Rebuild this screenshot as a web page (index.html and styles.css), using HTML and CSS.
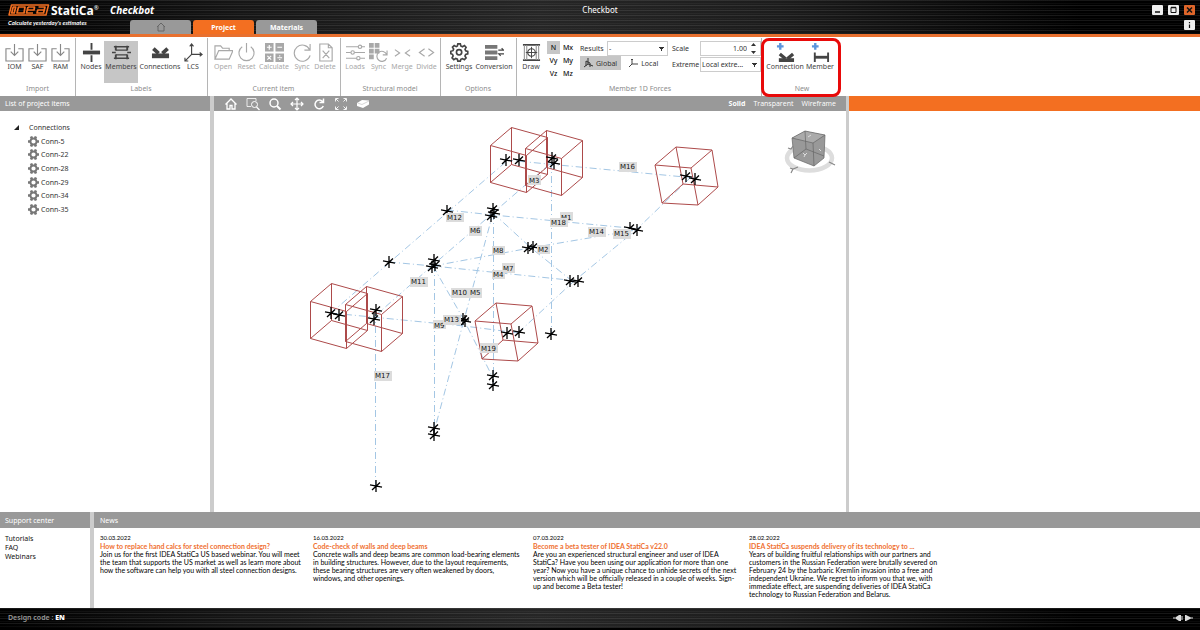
FILE: index.html
```html
<!DOCTYPE html>
<html lang="en">
<head>
<meta charset="utf-8">
<title>Checkbot</title>
<link rel="stylesheet" href="styles.css">
</head>
<body>
<svg class="defs" aria-hidden="true">
  <defs>
    <g id="i-import"><path d="M6 6H1v13h18V6h-5M10 1v12M6 9l4 4 4-4" /></g>
    <g id="i-plus"><path d="M4.500 0v7M1 3.500h7" stroke="#5b94dc" stroke-width="2.500"/></g>
    <g id="i-conn"><path d="M3 16h16v4H3z" fill="currentColor" stroke="none"/><path d="M4 11.500l6 5M18 11.500l-6 5" stroke-width="3.500"/></g>
    <g id="i-sync"><path d="M17.500 7A8.500 8.500 0 1 0 18 13M18 1v6.500h-6" /></g>
    <g id="i-gear"><path d="M8.500 1h3l.6 2.600 2 .9 2.400-1.400 2 2.100-1.300 2.300.8 2 2.500.6v3l-2.500.7-.9 2 1.400 2.300-2.100 2.100-2.300-1.300-2 .8-.6 2.300h-3l-.6-2.400-2-.8-2.300 1.300-2.100-2.100 1.300-2.300-.8-2L.0 13v-3l2.600-.7.8-2L2 5.100l2.100-2.100 2.400 1.400 1.400-.8z"/><circle cx="10" cy="11.300" r="3.200"/></g>
    <g id="i-item"><circle cx="6" cy="6" r="3.300" stroke-width="2"/><path d="M3.300.5l1 2.200M8.700.5l-1 2.200M0 6h2.500M12 6H9.500M3.300 11.500l1-2.200M8.700 11.500l-1-2.200" stroke-width="2.800"/></g>
    <g id="star"><path d="M-6-1.200L6 1.200M0-6V6M-4 4L4-3.500"/></g>
    <path id="boxa" d="M0 0L36 10V47L0 37zM21-18L57-8V29L21 19zM0 0L21-18M36 10L57-8M36 47L57 29M0 37L21 19"/>
    <path id="boxb" d="M0 0L21-18 57-15 36 3zM7 38L28 19 63 22 43 40zM0 0L7 38M21-18L28 19M57-15L63 22M36 3L43 40"/>
  </defs>
</svg>

<div class="app">
  <header class="titlebar">
    <div class="title-left">
      <div class="brand">
        <div class="brand-row">
          <svg class="logo" width="42" height="12" viewBox="0 0 42 12" role="img" aria-label="IDEA">
            <path d="M3.500 1h37L38 11H1z" fill="none" stroke="#f36f21" stroke-width="1.500" stroke-linejoin="round"/>
            <path d="M5.200 3L3.700 9h2.500l1.500-6zM10.500 3h6.500l-1 6H9zM20 3h6.500l-.5 3h-6.500M20 3l-1.500 6h6.500M30.500 3h6.500l-1.500 6h-6.500l.8-3h6.500" fill="none" stroke="#f36f21" stroke-width="1.700" stroke-linejoin="round"/>
          </svg>
          <span class="static">StatiCa<sup>®</sup></span>
          <span class="product">Checkbot</span>
        </div>
        <div class="tagline">Calculate yesterday's estimates</div>
      </div>
      <nav class="tabs">
        <button class="tab" aria-label="Home"><svg width="10" height="10" viewBox="0 0 10 10" fill="none" stroke="#666"><path d="M1 5l4-4 4 4M2 4v5h6V4"/></svg></button>
        <button class="tab active">Project</button>
        <button class="tab">Materials</button>
      </nav>
    </div>
    <h1 class="window-title">Checkbot</h1>
    <div class="window-buttons">
      <button aria-label="Minimize"><svg width="11" height="10" viewBox="0 0 11 10"><path d="M3 7h5" stroke="#111" stroke-width="1.500"/></svg></button>
      <button aria-label="Maximize"><svg width="11" height="10" viewBox="0 0 11 10"><path d="M3 2.500h5v5H3z" fill="none" stroke="#111"/><path d="M3 2.500h5" stroke="#111" stroke-width="1.500"/></svg></button>
      <button class="close" aria-label="Close"><svg width="11" height="10" viewBox="0 0 11 10"><path d="M3 2.500l5 5M8 2.500l-5 5" stroke="#111" stroke-width="1.500"/></svg></button>
      <button class="info" aria-label="Info"><svg width="11" height="10" viewBox="0 0 11 10"><path d="M5.500 2v1.300M5.500 4.500V8" stroke="#111" stroke-width="1.200"/></svg></button>
    </div>
  </header>

  <section class="ribbon">
    <div class="group import">
      <div class="tools">
        <button class="tool soft"><svg viewBox="0 0 20 20"><use href="#i-import"/></svg>IOM</button>
        <button class="tool soft"><svg viewBox="0 0 20 20"><use href="#i-import"/></svg>SAF</button>
        <button class="tool soft"><svg viewBox="0 0 20 20"><use href="#i-import"/></svg>RAM</button>
      </div>
      <h2>Import</h2>
    </div>
    <div class="group labels">
      <div class="tools">
        <button class="tool"><svg viewBox="0 0 20 20"><path d="M1 10h18" stroke-width="4"/><path d="M10 0v7M10 13v7" stroke-width="2"/></svg>Nodes</button>
        <button class="tool pressed"><svg viewBox="0 0 20 20"><path d="M2 4h16M2 16h16M4 7.500h12M4 12.500h12" stroke-width="1.500"/><path d="M4 3v5M16 3v5M4 12v5M16 12v5" stroke-width="2"/><path d="M0 10h4M16 10h4" stroke-width="1.500"/></svg>Members</button>
        <button class="tool"><svg viewBox="0 0 20 20"><path d="M1 11h18v5H1z" fill="currentColor" stroke="none"/><path d="M2.500 6l5.500 5M17.500 6l-5.500 5" stroke-width="4"/></svg>Connections</button>
        <button class="tool"><svg viewBox="0 0 20 20"><path d="M8 1v11h11M8 12L1 19M6 3.500L8 1l2 2.500M16.500 10l2.500 2-2.500 2M1 15.500V19h3.500"/></svg>LCS</button>
      </div>
      <h2>Labels</h2>
    </div>
    <div class="group current">
      <div class="tools">
        <button class="tool off" disabled><svg viewBox="0 0 20 20"><path d="M1 17V3h6l2 2.500h7V8M1 17L5 8h15l-4 9z"/></svg>Open</button>
        <button class="tool off" disabled><svg viewBox="0 0 20 20"><path d="M5.500 4a8 8 0 1 0 9 0M10 0v10"/></svg>Reset</button>
        <button class="tool off" disabled><svg viewBox="0 0 20 20"><path d="M0 0h9v9H0zM11 0h9v9h-9zM0 11h9v9H0zM11 11h9v9h-9z" fill="currentColor" stroke="none"/><path d="M4.500 2v5M2 4.500h5M13 4.500h5M2.500 13.500l4 4M6.500 13.500l-4 4M13 15.500h5M15.500 13v1.200M15.500 16.800V18" stroke="#fff"/></svg>Calculate</button>
        <button class="tool off" disabled><svg viewBox="0 0 20 20"><use href="#i-sync"/></svg>Sync</button>
        <button class="tool off" disabled><svg viewBox="0 0 20 20"><path d="M4 1h9l4 4v14H4zM13 1v4h4M7 8l7 8M14 8l-7 8"/></svg>Delete</button>
      </div>
      <h2>Current item</h2>
    </div>
    <div class="group structural">
      <div class="tools">
        <button class="tool off" disabled><svg viewBox="0 0 20 20"><path d="M0 4h13M16.500 4H20M0 10h5M9 10h11M0 16h11M15 16h5"/><circle cx="14.700" cy="4" r="1.800"/><circle cx="7" cy="10" r="1.800"/><circle cx="13" cy="16" r="1.800"/></svg>Loads</button>
        <button class="tool off" disabled><svg viewBox="0 0 20 20"><path d="M0 0h5v5H0zM6 0h5v5H6zM0 6h5v5H0zM6 6h5v5H6zM0 12h5v5H0z" fill="currentColor" stroke="none"/><path d="M18.500 12a5.300 5.300 0 1 0 0 4M19 8v4.500h-4.500"/></svg>Sync</button>
        <button class="tool off" disabled><svg viewBox="0 0 20 20"><path d="M2 7l5 3.500L2 14M18 7l-5 3.500 5 3.500"/></svg>Merge</button>
        <button class="tool off" disabled><svg viewBox="0 0 20 20"><path d="M8 6l-5.500 4L8 14M12 6l5.500 4L12 14"/></svg>Divide</button>
      </div>
      <h2>Structural model</h2>
    </div>
    <div class="group options">
      <div class="tools">
        <button class="tool"><svg viewBox="-1 0 23 23" class="bold"><use href="#i-gear"/></svg>Settings</button>
        <button class="tool"><svg viewBox="0 0 20 20"><path d="M0 2h13v4H0zM0 8h13v4H0zM0 14h13v4H0z" fill="#777" stroke="none"/><path d="M14 7.500h5.500l-2-2M20 11.500h-5.500l2 2"/></svg>Conversion</button>
      </div>
      <h2>Options</h2>
    </div>
    <div class="group forces">
      <div class="forces-row">
        <button class="tool"><svg viewBox="0 0 20 20"><path d="M1 2h18M1 18h18" stroke-width="2"/><path d="M2.500 2v16M5 2v16M15 2v16M17.500 2v16" stroke="#999"/><circle cx="10" cy="10" r="4"/><path d="M10 4v12M4 10h12" stroke-width="1"/></svg>Draw</button>
        <div class="components">
          <button class="pressed">N</button><button>Mx</button>
          <button>Vy</button><button>My</button>
          <button>Vz</button><button>Mz</button>
        </div>
        <div class="result-fields">
          <div class="field">
            <label for="results">Results</label>
            <select id="results"><option>-</option></select>
          </div>
          <div class="axes">
            <button class="pressed"><svg width="9" height="10" viewBox="0 0 9 10" fill="none" stroke="#333"><path d="M4 0v6l5 2M4 6L0 9M2 3l4 2v4M2 3v5"/></svg>Global</button>
            <button><svg width="9" height="10" viewBox="0 0 9 10" fill="none" stroke="#444"><path d="M3 1v5l-3 3M3 6h6M2 2l1-1 1 1"/></svg>Local</button>
          </div>
        </div>
        <div class="scale-fields">
          <div class="field">
            <label for="scale">Scale</label>
            <div class="spinner"><input id="scale" type="text" value="1.00"><svg width="5" height="11" viewBox="0 0 5 11" fill="#333"><path d="M0 3l2.500-3L5 3zM0 8h5l-2.500 3z"/></svg></div>
          </div>
          <div class="field">
            <label for="extreme">Extreme</label>
            <select id="extreme"><option>Local extre...</option></select>
          </div>
        </div>
      </div>
      <h2>Member 1D Forces</h2>
    </div>
    <div class="group new">
      <div class="tools">
        <button class="tool"><svg viewBox="0 0 20 20"><use href="#i-plus"/><use href="#i-conn"/></svg>Connection</button>
        <button class="tool"><svg viewBox="0 0 20 20"><use href="#i-plus"/><path d="M4 10v10M18 10v10" stroke-width="2"/><path d="M4 15h14" stroke-width="3"/></svg>Member</button>
      </div>
      <h2>New</h2>
    </div>
  </section>

  <main class="workspace">
    <aside class="project">
      <h2 class="bar">List of project items</h2>
      <ul class="tree">
        <li class="root"><svg width="5" height="5" viewBox="0 0 5 5"><path d="M5 0v5H0z" fill="#222"/></svg>Connections</li>
        <li><svg width="11" height="11" viewBox="0 0 12 12"><use href="#i-item"/></svg>Conn-5</li>
        <li><svg width="11" height="11" viewBox="0 0 12 12"><use href="#i-item"/></svg>Conn-22</li>
        <li><svg width="11" height="11" viewBox="0 0 12 12"><use href="#i-item"/></svg>Conn-28</li>
        <li><svg width="11" height="11" viewBox="0 0 12 12"><use href="#i-item"/></svg>Conn-29</li>
        <li><svg width="11" height="11" viewBox="0 0 12 12"><use href="#i-item"/></svg>Conn-34</li>
        <li><svg width="11" height="11" viewBox="0 0 12 12"><use href="#i-item"/></svg>Conn-35</li>
      </ul>
    </aside>

    <section class="view">
      <div class="bar view-bar">
        <div class="view-tools">
          <button aria-label="Home view"><svg viewBox="0 0 14 14"><path d="M1.500 7.500L7 2l5.500 5.500M3 6.500V12h3V8.500h2V12h3V6.500" stroke-width="1.300"/></svg></button>
          <button aria-label="Zoom window"><svg viewBox="0 0 14 14"><path d="M5 9.500H1v-8h9V4" stroke-width=".8"/><circle cx="8.500" cy="7.500" r="3" stroke-width="1"/><path d="M10.500 10l3 3" stroke-width="1.300"/></svg></button>
          <button aria-label="Zoom"><svg viewBox="0 0 14 14"><circle cx="6" cy="6" r="4" stroke-width="1.500"/><path d="M9 9l3.500 3.500" stroke-width="2"/></svg></button>
          <button aria-label="Pan"><svg viewBox="0 0 14 14"><path d="M7 1v12M1 7h12M5 3l2-2 2 2M5 11l2 2 2-2M3 5L1 7l2 2M11 5l2 2-2 2" stroke-width="1.200"/></svg></button>
          <button aria-label="Rotate"><svg viewBox="0 0 14 14"><path d="M10.500 4.500a4.300 4.300 0 1 0 .8 4.500M11.500 1.500v4H7.500" stroke-width="1.500"/></svg></button>
          <button aria-label="Fit all"><svg viewBox="0 0 14 14"><path d="M1.500 4.500v-3h3M9.500 1.500h3v3M12.500 9.500v3h-3M4.500 12.500h-3v-3M2 2l2.500 2.500M12 2L9.500 4.500M12 12L9.500 9.500M2 12l2.500-2.500" stroke-width=".9"/></svg></button>
          <button aria-label="Section"><svg viewBox="0 0 14 14"><path d="M1 6l5-3 7 .5v4L7 11 1 9z" fill="#fff" stroke="none"/><path d="M1.500 6l4.500 1.500L13 4" stroke="#bbb" stroke-width=".6"/></svg></button>
        </div>
        <div class="modes">
          <button class="on">Solid</button>
          <button>Transparent</button>
          <button>Wireframe</button>
        </div>
      </div>
      <svg class="canvas" viewBox="214 111 632 401" preserveAspectRatio="xMinYMin meet">
        <g class="axes-lines">
          <path d="M331 313L508 160M375 316L433 265 493 213 552 162M447 210L493 215 640 229M389 262L433 266 578 281M331 313L464 326 519 333M506 160L695 178M493 213L530 247 572 281M433 266L530 248 636 230M551.500 162V334M493.500 213V385M434.500 265V435M375.500 312V486M433 266L464 320 493 378M493 213L464 320 434 432M690 178L636 230 573 282 519 332"/>
        </g>
        <g class="boxes">
          <use href="#boxa" x="490.500" y="145.500"/><use href="#boxa" x="525.500" y="148.500"/>
          <use href="#boxa" x="310.500" y="301.500"/><use href="#boxa" x="345.500" y="304.500"/>
          <use href="#boxb" x="655" y="165"/><use href="#boxb" x="475" y="321"/>
        </g>
        <g class="stars">
          <use href="#star" x="506" y="160"/><use href="#star" x="519" y="160"/><use href="#star" x="552" y="158"/><use href="#star" x="554" y="163"/>
          <use href="#star" x="447" y="211"/><use href="#star" x="493" y="209"/><use href="#star" x="494" y="213"/><use href="#star" x="491" y="216"/>
          <use href="#star" x="389" y="262"/><use href="#star" x="434" y="260"/><use href="#star" x="435" y="265"/><use href="#star" x="432" y="267"/>
          <use href="#star" x="528" y="248"/><use href="#star" x="533" y="247"/><use href="#star" x="570" y="281"/><use href="#star" x="578" y="281"/>
          <use href="#star" x="630" y="228"/><use href="#star" x="637" y="230"/><use href="#star" x="463" y="319"/><use href="#star" x="465" y="321"/>
          <use href="#star" x="507" y="333"/><use href="#star" x="519" y="332"/><use href="#star" x="551" y="334"/><use href="#star" x="686" y="176"/><use href="#star" x="695" y="179"/>
          <use href="#star" x="331" y="313"/><use href="#star" x="339" y="315"/><use href="#star" x="376" y="310"/><use href="#star" x="374" y="319"/>
          <use href="#star" x="493" y="376"/><use href="#star" x="493" y="385"/><use href="#star" x="434" y="428"/><use href="#star" x="434" y="435"/><use href="#star" x="376" y="486"/>
        </g>
        <g class="tags">
          <rect x="528" y="175" width="13" height="10"/><text x="529" y="183">M3</text>
          <rect x="446" y="213" width="18" height="9"/><text x="447" y="220">M12</text>
          <rect x="469" y="226" width="13" height="10"/><text x="470" y="233">M6</text>
          <rect x="492" y="246" width="13" height="9"/><text x="493" y="253">M8</text>
          <rect x="537" y="245" width="13" height="9"/><text x="538" y="252">M2</text>
          <rect x="560" y="212" width="13" height="9"/><text x="561" y="220">M1</text>
          <rect x="550" y="218" width="18" height="9"/><text x="551" y="225">M18</text>
          <rect x="588" y="227" width="18" height="10"/><text x="589" y="234">M14</text>
          <rect x="613" y="229" width="18" height="10"/><text x="614" y="236">M15</text>
          <rect x="619" y="162" width="18" height="10"/><text x="620" y="169">M16</text>
          <rect x="502" y="263" width="13" height="10"/><text x="503" y="271">M7</text>
          <rect x="492" y="270" width="13" height="9"/><text x="493" y="277">M4</text>
          <rect x="410" y="277" width="18" height="10"/><text x="411" y="284">M11</text>
          <rect x="451" y="288" width="18" height="10"/><text x="452" y="295">M10</text>
          <rect x="469" y="288" width="13" height="10"/><text x="470" y="295">M5</text>
          <rect x="433" y="320" width="13" height="9"/><text x="434" y="328">M9</text>
          <rect x="443" y="315" width="18" height="10"/><text x="444" y="322">M13</text>
          <rect x="480" y="343" width="18" height="10"/><text x="481" y="351">M19</text>
          <rect x="374" y="371" width="18" height="10"/><text x="375" y="378">M17</text>
        </g>
        <g>
          <ellipse cx="809.500" cy="158" rx="22.500" ry="12.500" fill="none" stroke="#ddd" stroke-width="4.500"/>
          <path d="M792 138l13-7 20 4-1 23-10 8-20-8z" fill="#999"/>
          <path d="M792 138l21 5 12-8-20-4z" fill="#aaa"/>
          <path d="M792 138l21 5 12-8-20-4zM792 138l2 20 20 8-1-23M825 135l-1 23-10 8M805 131l1 18-12 9M806 149l18 7" fill="none" stroke="#666" stroke-width=".7"/>
          <path d="M790 168l3 1 5-2M793 169l-2 4M788 148l3 1 2-3M829 162l6 3" fill="none" stroke="#888" stroke-width="1.200"/>
          <path d="M803 153l2 2 2-2M805 155l-1 2M819 149l2 2M808 137l3-2" fill="none" stroke="#ddd"/>
        </g>
      </svg>
    </section>

    <aside class="detail"><div class="bar orange"></div></aside>
  </main>

  <section class="bottom">
    <div class="support">
      <h2 class="bar tall">Support center</h2>
      <ul>
        <li><a href="#">Tutorials</a></li>
        <li><a href="#">FAQ</a></li>
        <li><a href="#">Webinars</a></li>
      </ul>
    </div>
    <div class="news">
      <h2 class="bar tall">News</h2>
      <div class="articles">
        <article><time>30.03.2022</time><a href="#">How to replace hand calcs for steel connection design?</a>
          <p>Join us for the first IDEA StatiCa US based webinar. You will meet<br>the team that supports the US market as well as learn more about<br>how the software can help you with all steel connection designs.</p></article>
        <article><time>16.03.2022</time><a href="#">Code-check of walls and deep beams</a>
          <p>Concrete walls and deep beams are common load-bearing elements<br>in building structures. However, due to the layout requirements,<br>these bearing structures are very often weakened by doors,<br>windows, and other openings.</p></article>
        <article><time>07.03.2022</time><a href="#">Become a beta tester of IDEA StatiCa v22.0</a>
          <p>Are you an experienced structural engineer and user of IDEA<br>StatiCa? Have you been using our application for more than one<br>year? Now you have a unique chance to unhide secrets of the next<br>version which will be officially released in a couple of weeks. Sign-<br>up and become a Beta tester!</p></article>
        <article><time>28.02.2022</time><a href="#">IDEA StatiCa suspends delivery of its technology to ...</a>
          <p>Years of building fruitful relationships with our partners and<br>customers in the Russian Federation were brutally severed on<br>February 24 by the barbaric Kremlin invasion into a free and<br>independent Ukraine. We regret to inform you that we, with<br>immediate effect, are suspending deliveries of IDEA StatiCa<br>technology to Russian Federation and Belarus.</p></article>
      </div>
    </div>
  </section>

  <footer class="status">
    <span>Design code : <b>EN</b></span>
    <svg width="20" height="8" viewBox="0 0 20 8" fill="#ddd"><path d="M0 3.500h3V3l3-2h2v1.500h2v1H8v1h2v1H8V7H6L3 5v-.5H0zM12 1h1l5 2.500h2v1h-2L13 7h-1z"/></svg>
  </footer>
</div>
</body>
</html>
```

FILE: styles.css
```css
* { box-sizing: border-box; }
body { margin: 0; font: 7px/9px "Noto Sans", sans-serif; color: #333; background: #fff; }
h1, h2, p, ul { margin: 0; padding: 0; font-size: inherit; font-weight: 400; list-style: none; }
button { border: 0; padding: 0; margin: 0; background: none; font: inherit; color: inherit; }
a { color: inherit; text-decoration: none; }
svg { display: block; flex: none; }
.defs { position: absolute; width: 0; height: 0; }
.app { display: flex; flex-direction: column; min-height: 100vh; }

.titlebar, .status {
  background:
    repeating-linear-gradient(180deg, rgba(255,255,255,.09) 0 1px, transparent 1px 3px, rgba(255,255,255,.04) 3px 4px, transparent 4px 5px),
    linear-gradient(90deg, #000 0%, #161616 20%, #262626 45%, #1c1c1c 65%, #000 90%);
  color: #fff;
}
.titlebar { display: grid; grid-template-columns: 1fr auto 1fr; height: 37px; border-bottom: 3px solid #e8702f; }
.title-left { display: grid; grid-template-columns: 130px auto; justify-content: start; }
.brand { padding: 3px 0 0 8px; white-space: nowrap; }
.brand-row { display: flex; align-items: center; height: 14px; }
.static { flex: none; width: 59px; margin-left: 1px; font-size: 12px; font-weight: 700; }
.static sup { font-size: 6px; line-height: 0; font-weight: 400; }
.product { font: italic 700 10px/14px "Noto Sans", sans-serif; }
.tagline { margin-top: 2px; font: italic 700 6px/8px Lato, sans-serif; }
.tabs { display: flex; gap: 2px; align-self: end; }
.tab { display: flex; align-items: center; justify-content: center; width: 61px; height: 14px; border-radius: 3px 3px 0 0; background: #999; color: #fff; font-weight: 700; }
.tab.active { background: #f36f21; }
.window-title { font-size: 8px; line-height: 12px; padding-top: 4px; text-align: center; }
.window-buttons { display: grid; grid-template-columns: repeat(3, 11px); gap: 5px; justify-content: end; align-content: start; padding: 5px 5px 0 0; }
.window-buttons button { height: 10px; background: #eee; border-radius: 1px; }
.window-buttons .close { background: #e0662a; }
.window-buttons .info { grid-column: 3; }

.ribbon { display: flex; height: 59px; padding-top: 1px; }
.group { display: flex; flex-direction: column; padding: 3px 3px 0 2px; border-right: 1px solid #b5b5b5; }
.group h2 { text-align: center; color: #8c8c8c; margin-top: auto; padding-bottom: 3px; }
.tools { display: grid; }
.tool { display: flex; flex-direction: column; align-items: center; height: 42px; padding-top: 2px; white-space: nowrap; color: #444; }
.tool svg { width: 19px; height: 19px; fill: none; stroke: currentColor; stroke-width: 1.2; }
.tool .bold { stroke-width: 2; }
.tool.soft svg { color: #888; }
.tool.off { color: #a8a8a8; }
.pressed { background: #c6c6c6; }
.import { width: 76px; padding-left: 3px; }
.import .tools { grid-template-columns: repeat(3, 23px); }
.labels { width: 132px; }
.labels .tools { grid-template-columns: 26px 34px 44px 22px; }
.current { width: 133px; }
.current .tools { grid-template-columns: 26px 21px 34px 22px 24px; }
.structural { width: 100px; }
.structural .tools { grid-template-columns: 24px 23px 24px 25px; }
.options { width: 76px; }
.options .tools { grid-template-columns: 32px 38px; }
.forces { width: 245px; padding-right: 0; }
.forces-row { display: flex; }
.forces-row > .tool { width: 26px; }
.components { display: grid; grid-template-columns: 13px 14px; grid-auto-rows: 13px; column-gap: 1px; margin: 0 5px 0 4px; color: #111; font-weight: 500; }
.field { display: flex; align-items: center; height: 15px; }
.field select { appearance: none; height: 15px; border: 1px solid #ccc; border-radius: 0; padding: 0 1px; font: inherit; color: #333; background: #fff conic-gradient(from -30deg at 50% 100%, #333 60deg, transparent 0) right 3px center / 5px 4px no-repeat; }
.result-fields label { width: 27px; }
.result-fields select { width: 61px; }
.axes { display: flex; gap: 4px; }
.axes button { display: flex; align-items: center; gap: 3px; height: 14px; padding: 0 4px; }
.scale-fields { margin-left: 4px; display: grid; row-gap: 1px; align-content: start; }
.scale-fields label { width: 28px; }
.scale-fields select { width: 61px; }
.spinner { display: flex; align-items: center; width: 61px; height: 15px; border: 1px solid #ccc; padding-right: 4px; }
.spinner input { width: 46px; margin-right: auto; border: 0; padding: 0; text-align: right; font: inherit; color: #333; background: none; }
.new { position: relative; width: 79px; border: 0; padding: 3px 4px 0 5px; }
.new .tools { grid-template-columns: 36px 34px; }
.new::after { content: ""; position: absolute; inset: 0 0 -1px -1px; border: 3px solid #e80a0a; border-radius: 8px; }

.bar { display: flex; align-items: center; height: 15px; padding: 0 5px; background: #999; color: #fff; }
.bar.tall { height: 16px; }
.bar.orange { background: #f36f21; }
.workspace { display: grid; grid-template-columns: 214px minmax(400px, 635px) 1fr; flex: 1; }
.project { border-right: 4px solid #ccc; }
.tree { display: grid; grid-auto-rows: 1fr; height: 95px; margin-top: 10px; }
.tree li { display: flex; align-items: center; gap: 2px; padding-left: 28px; }
.tree li svg { fill: none; stroke: #777; }
.tree .root { padding-left: 14px; gap: 10px; }
.tree .root svg { stroke: none; }
.view { display: flex; flex-direction: column; border-right: 3px solid #ccc; min-width: 0; }
.view-bar { justify-content: space-between; padding: 0 10px; }
.view-tools { display: flex; gap: 8px; }
.view-tools svg { width: 14px; height: 14px; fill: none; stroke: #fff; }
.modes { display: flex; gap: 8px; font-family: "Open Sans", sans-serif; }
.modes .on { font-weight: 700; }
.canvas { width: 100%; height: auto; }
.axes-lines { fill: none; stroke: #a3c6e4; stroke-width: 1; stroke-dasharray: 7 3 1 3; }
.boxes { fill: none; stroke: #ad4a4a; stroke-width: 1; }
.stars { stroke: #000; stroke-width: 1.3; }
.tags rect { fill: #dcdcdc; }
.tags text { font: 7px "DejaVu Sans", sans-serif; fill: #111; }

.bottom { display: grid; grid-template-columns: 94px 1fr; height: 96px; }
.support { border-right: 4px solid #ccc; color: #111; }
.support ul { padding: 6px 5px; }
.news .bar { padding-left: 6px; }
.articles { display: grid; grid-template-columns: 213px 220px 216px 1fr; padding: 6px; white-space: nowrap; font: 7px/8px Lato, sans-serif; color: #000; }
.articles time, .articles a { display: block; }
.articles time { font-size: 6px; }
.articles a { color: #f07030; font-weight: 700; }
.status { display: flex; align-items: center; justify-content: space-between; height: 22px; padding: 0 7px 1px 8px; border-bottom: 2px solid #000; color: #999; }
.status span { font-weight: 600; }
.status b { color: #fff; }
```
